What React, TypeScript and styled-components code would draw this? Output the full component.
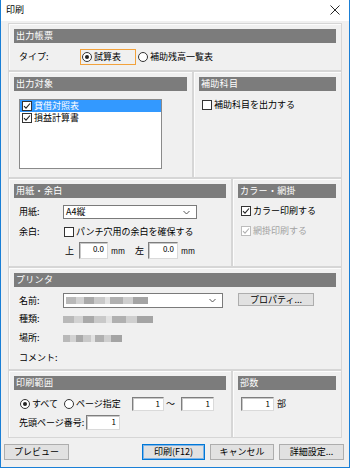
import React from 'react';
import styled, { createGlobalStyle } from 'styled-components';

const GlobalStyle = createGlobalStyle`
  html, body {
    margin: 0;
    padding: 0;
    background: #fff;
  }
  body {
    font-family: "Noto Sans CJK JP", "Noto Sans", sans-serif;
    font-size: 9px;
    color: #000;
  }
  * {
    box-sizing: border-box;
  }
`;

const Window = styled.div`
  width: 350px;
  height: 468px;
  border: 1px solid #1a7fd6;
  border-top: none;
  background: #f0f0f0;
  display: flex;
  flex-direction: column;
`;

const TitleBar = styled.div`
  height: 21px;
  flex: none;
  background: #fff;
  display: flex;
  align-items: center;
  justify-content: space-between;
  padding: 0 5px 1px 5px;
`;

const Title = styled.span`
  font-size: 9px;
  line-height: 12px;
`;

const Body = styled.div`
  flex: 1;
  display: flex;
  flex-direction: column;
  padding-top: 2px;
`;

const Groups = styled.div`
  margin: 0 7px;
  display: flex;
  flex-direction: column;
`;

const GroupRow = styled.div`
  display: flex;
`;

const Group = styled.section<{ $w?: number; $h: number }>`
  width: ${p => (p.$w ? `${p.$w}px` : 'auto')};
  flex: ${p => (p.$w ? 'none' : '1')};
  height: ${p => p.$h}px;
  border: 1px solid #d6d6d6;
  box-shadow: inset 1px 1px 0 #fcfcfc;
  padding: 5px;
  display: flex;
  flex-direction: column;
`;

const GroupTitle = styled.div`
  height: 14px;
  flex: none;
  background: #7c7c7c;
  color: #fff;
  font-size: 9px;
  line-height: 14px;
  padding-left: 2px;
  letter-spacing: 0.3px;
`;

const Row = styled.div<{ $top: number; $h: number; $indent?: number }>`
  display: flex;
  align-items: center;
  margin-top: ${p => p.$top}px;
  height: ${p => p.$h}px;
  padding-left: ${p => p.$indent ?? 0}px;
  flex: none;
`;

const Label = styled.span<{ $w: number }>`
  width: ${p => p.$w}px;
  flex: none;
  padding-left: 5px;
  line-height: 12px;
  white-space: nowrap;
`;

const Caption = styled.span<{ $w?: number; $pad?: number; $small?: boolean }>`
  width: ${p => (p.$w ? `${p.$w}px` : 'auto')};
  flex: none;
  padding-left: ${p => p.$pad ?? 0}px;
  font-size: ${p => (p.$small ? '7.5px' : '9px')};
  line-height: 12px;
  white-space: nowrap;
`;

const RadioOption = styled.label<{ $focused?: boolean; $w?: number }>`
  display: inline-flex;
  align-items: center;
  gap: 2px;
  height: 16px;
  width: ${p => (p.$w ? `${p.$w}px` : 'auto')};
  flex: none;
  padding: 0 1px;
  border: 1px solid ${p => (p.$focused ? '#f2a23c' : 'transparent')};
  line-height: 12px;
  white-space: nowrap;
`;

const RadioCircle = styled.span<{ $checked?: boolean }>`
  width: 10px;
  height: 10px;
  flex: none;
  border: 1px solid #333;
  border-radius: 50%;
  background: #fff;
  display: inline-flex;
  align-items: center;
  justify-content: center;

  &::after {
    content: '';
    width: 4px;
    height: 4px;
    border-radius: 50%;
    background: ${p => (p.$checked ? '#222' : 'transparent')};
  }
`;

const CheckOption = styled.label<{ $disabled?: boolean; $offset?: number }>`
  display: inline-flex;
  align-items: center;
  gap: 2px;
  margin-left: ${p => p.$offset ?? 0}px;
  color: ${p => (p.$disabled ? '#a3a3a3' : 'inherit')};
  line-height: 12px;
  white-space: nowrap;
`;

const CheckBox = styled.span<{ $disabled?: boolean }>`
  width: 10px;
  height: 10px;
  flex: none;
  border: 1px solid ${p => (p.$disabled ? '#bcbcbc' : '#333')};
  background: #fff;
  display: inline-flex;
  align-items: center;
  justify-content: center;
`;

const Check = ({ checked, disabled }: { checked?: boolean; disabled?: boolean }) => (
  <CheckBox $disabled={disabled}>
    {checked && (
      <svg width="8" height="8" viewBox="0 0 8 8">
        <path
          d="M1 4.2 L3 6.2 L7 1.5"
          fill="none"
          stroke={disabled ? '#b0b0b0' : '#222'}
          strokeWidth="1.1"
        />
      </svg>
    )}
  </CheckBox>
);

const ListBox = styled.div`
  width: 143px;
  height: 70px;
  margin: 8px 0 0 5px;
  background: #fff;
  border: 1px solid #8a8a8a;
  padding-top: 0;
  display: flex;
  flex-direction: column;
`;

const ListItem = styled.div<{ $selected?: boolean }>`
  height: 12px;
  display: flex;
  align-items: center;
  gap: 2px;
  padding-left: 2px;
  background: ${p => (p.$selected ? '#3399ff' : 'transparent')};
  color: ${p => (p.$selected ? '#fff' : '#000')};
  line-height: 12px;
  white-space: nowrap;
`;

const Combo = styled.div<{ $w: number }>`
  width: ${p => p.$w}px;
  height: 100%;
  flex: none;
  background: #fff;
  border: 1px solid #7a7a7a;
  display: flex;
  align-items: center;
  justify-content: space-between;
  padding: 0 6px 0 2px;
  line-height: 12px;
`;

const Chevron = () => (
  <svg width="7" height="5" viewBox="0 0 7 5">
    <path d="M0.5 1 L3.5 4 L6.5 1" fill="none" stroke="#444" strokeWidth="0.9" />
  </svg>
);

const NumberField = styled.div<{ $w: number; $offset?: number }>`
  width: ${p => p.$w}px;
  height: 100%;
  flex: none;
  margin-left: ${p => p.$offset ?? 0}px;
  background: #fff;
  border: 1px solid;
  border-color: #7e7e7e #dadada #dadada #7e7e7e;
  box-shadow: inset 1px 1px 0 #c8c8c8;
  text-align: right;
  padding-right: 3px;
  font-size: 8px;
  line-height: 12px;
`;

const Redacted = styled.div<{ $w: number }>`
  width: ${p => p.$w}px;
  height: 7px;
  flex: none;
  background: linear-gradient(
    90deg,
    #b9b9b9 0 12%,
    #d2d2d2 12% 22%,
    #a9a9a9 22% 34%,
    #c9c9c9 34% 48%,
    #e2e2e2 48% 54%,
    #b0b0b0 54% 70%,
    #cfcfcf 70% 82%,
    #a4a4a4 82% 100%
  );
  filter: blur(0.6px);
`;

const Button = styled.button<{ $w: number; $focused?: boolean; $push?: boolean }>`
  width: ${p => p.$w}px;
  height: 16px;
  flex: none;
  margin-left: ${p => (p.$push ? 'auto' : '0')};
  background: #e1e1e1;
  border: 1px solid ${p => (p.$focused ? '#0078d7' : '#adadad')};
  box-shadow: ${p => (p.$focused ? 'inset 0 0 0 1px #7fb4e6' : 'none')};
  font-family: inherit;
  font-size: 9px;
  line-height: 12px;
  color: #000;
  padding: 0;
  white-space: nowrap;
`;

const ButtonBar = styled.div`
  display: flex;
  gap: 5px;
  margin: 6px 5px 0 3px;
`;

const CloseIcon = () => (
  <svg width="10" height="10" viewBox="0 0 10 10" style={{ marginRight: 4 }}>
    <path d="M0.5 0.5 L9.5 9.5 M9.5 0.5 L0.5 9.5" stroke="#111" strokeWidth="0.9" />
  </svg>
);

export default function App() {
  return (
    <>
      <GlobalStyle />
      <Window>
        <TitleBar>
          <Title>印刷</Title>
          <CloseIcon />
        </TitleBar>
        <Body>
          <Groups>
            <Group $h={49}>
              <GroupTitle>出力帳票</GroupTitle>
              <Row $top={6} $h={16}>
                <Label $w={66}>タイプ:</Label>
                <RadioOption $focused $w={56}>
                  <RadioCircle $checked />
                  試算表
                </RadioOption>
                <RadioOption>
                  <RadioCircle />
                  補助残高一覧表
                </RadioOption>
              </Row>
            </Group>

            <GroupRow>
              <Group $w={185} $h={107}>
                <GroupTitle>出力対象</GroupTitle>
                <ListBox>
                  <ListItem $selected>
                    <Check checked />
                    貸借対照表
                  </ListItem>
                  <ListItem>
                    <Check checked />
                    損益計算書
                  </ListItem>
                </ListBox>
              </Group>
              <Group $h={107}>
                <GroupTitle>補助科目</GroupTitle>
                <Row $top={8} $h={12}>
                  <CheckOption $offset={3}>
                    <Check />
                    補助科目を出力する
                  </CheckOption>
                </Row>
              </Group>
            </GroupRow>

            <GroupRow>
              <Group $w={224} $h={89}>
                <GroupTitle>用紙・余白</GroupTitle>
                <Row $top={7} $h={14}>
                  <Label $w={49}>用紙:</Label>
                  <Combo $w={134}>
                    A4縦
                    <Chevron />
                  </Combo>
                </Row>
                <Row $top={7} $h={12}>
                  <Label $w={50}>余白:</Label>
                  <CheckOption>
                    <Check />
                    パンチ穴用の余白を確保する
                  </CheckOption>
                </Row>
                <Row $top={4} $h={17} $indent={51}>
                  <Caption $w={14}>上</Caption>
                  <NumberField $w={29}>0.0</NumberField>
                  <Caption $w={27} $pad={3} $small>
                    mm
                  </Caption>
                  <Caption $w={13}>左</Caption>
                  <NumberField $w={30}>0.0</NumberField>
                  <Caption $pad={3} $small>
                    mm
                  </Caption>
                </Row>
              </Group>
              <Group $h={89}>
                <GroupTitle>カラー・網掛</GroupTitle>
                <Row $top={7} $h={12}>
                  <CheckOption $offset={3}>
                    <Check checked />
                    カラー印刷する
                  </CheckOption>
                </Row>
                <Row $top={8} $h={12}>
                  <CheckOption $offset={3} $disabled>
                    <Check checked disabled />
                    網掛印刷する
                  </CheckOption>
                </Row>
              </Group>
            </GroupRow>

            <Group $h={106}>
              <GroupTitle>プリンタ</GroupTitle>
              <Row $top={6} $h={15}>
                <Label $w={49}>名前:</Label>
                <Combo $w={160}>
                  <Redacted $w={82} />
                  <Chevron />
                </Combo>
                <Button $w={76} style={{ marginLeft: 15, height: 13, alignSelf: 'flex-start' }}>
                  プロパティ...
                </Button>
              </Row>
              <Row $top={5} $h={12}>
                <Label $w={49}>種類:</Label>
                <Redacted $w={90} />
              </Row>
              <Row $top={7} $h={12}>
                <Label $w={49}>場所:</Label>
                <Redacted $w={59} />
              </Row>
              <Row $top={8} $h={12}>
                <Label $w={49}>コメント:</Label>
              </Row>
            </Group>

            <GroupRow>
              <Group $w={224} $h={68}>
                <GroupTitle>印刷範囲</GroupTitle>
                <Row $top={7} $h={14} $indent={4}>
                  <RadioOption $w={44}>
                    <RadioCircle $checked />
                    すべて
                  </RadioOption>
                  <RadioOption $w={70}>
                    <RadioCircle />
                    ページ指定
                  </RadioOption>
                  <NumberField $w={32}>1</NumberField>
                  <Caption $w={17} $pad={2}>
                    ～
                  </Caption>
                  <NumberField $w={33}>1</NumberField>
                </Row>
                <Row $top={4} $h={15}>
                  <Label $w={72}>先頭ページ番号:</Label>
                  <NumberField $w={34}>1</NumberField>
                </Row>
              </Group>
              <Group $h={68}>
                <GroupTitle>部数</GroupTitle>
                <Row $top={7} $h={14}>
                  <NumberField $w={33} $offset={3}>
                    1
                  </NumberField>
                  <Caption $pad={3}>部</Caption>
                </Row>
              </Group>
            </GroupRow>
          </Groups>

          <ButtonBar>
            <Button $w={65}>プレビュー</Button>
            <Button $w={63} $focused $push>
              印刷(F12)
            </Button>
            <Button $w={64}>キャンセル</Button>
            <Button $w={65}>詳細設定...</Button>
          </ButtonBar>
        </Body>
      </Window>
    </>
  );
}
